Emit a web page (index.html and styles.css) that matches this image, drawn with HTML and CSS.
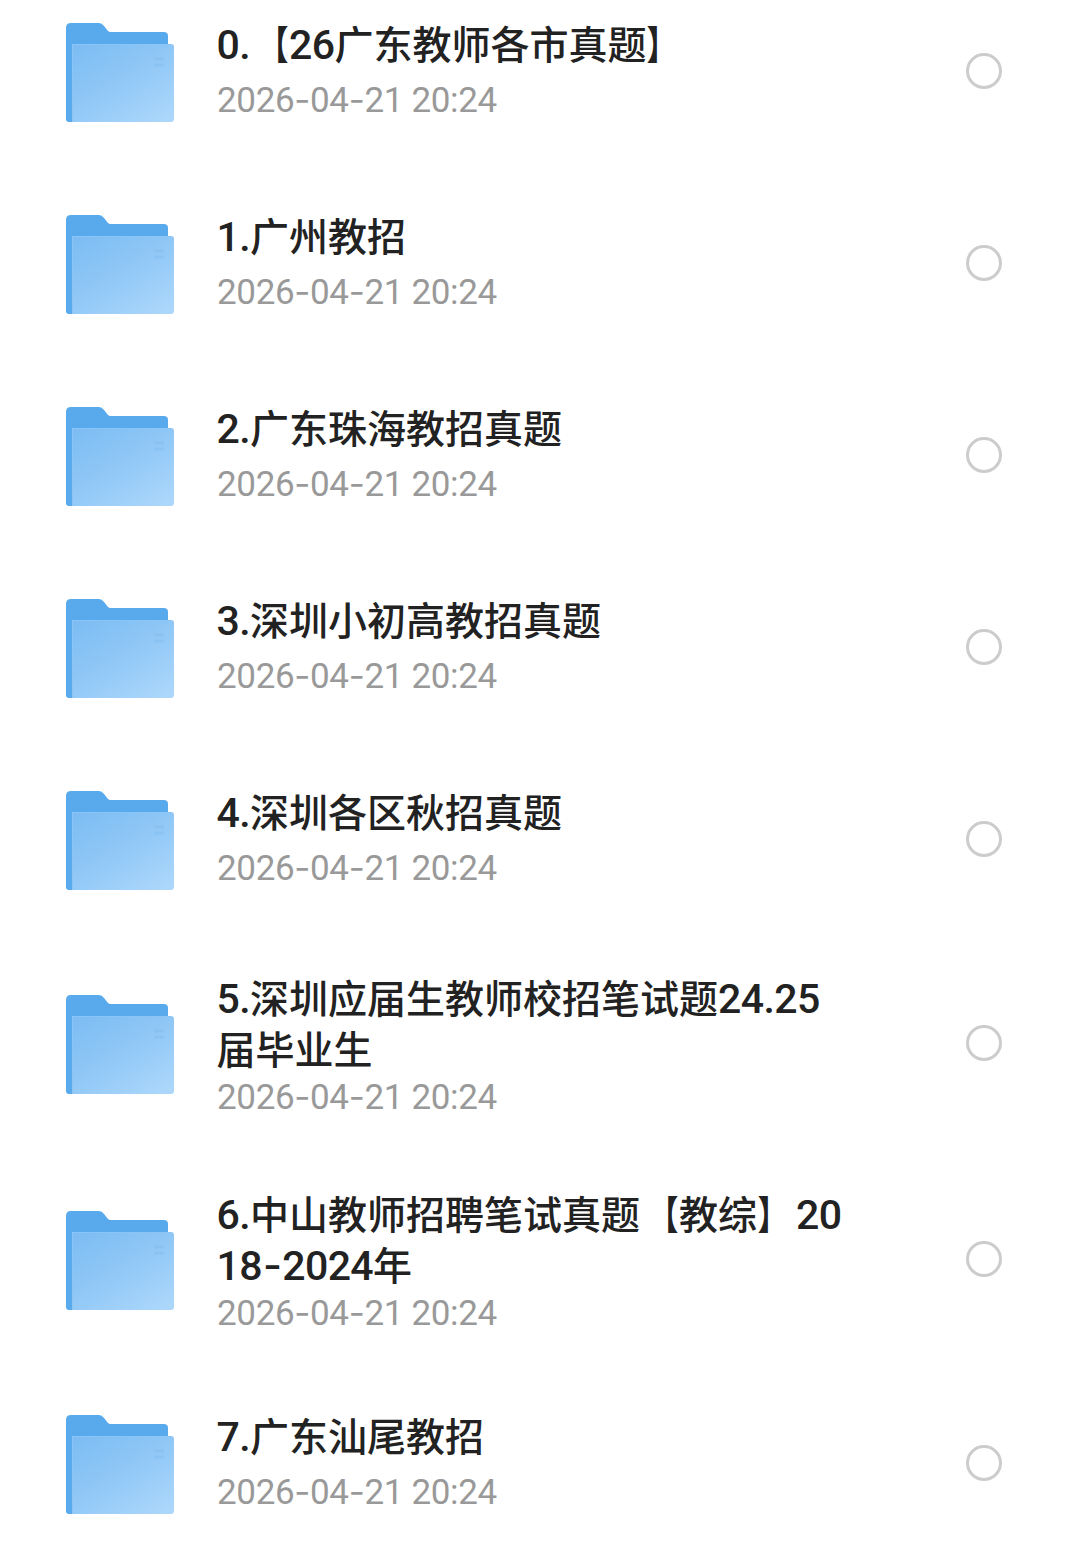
FILE: index.html
```
<!DOCTYPE html>
<html lang="zh-CN">
<head>
    <meta charset="UTF-8">
    <meta name="viewport" content="width=device-width, initial-scale=1.0">
    <title>文件列表</title>
    <link rel="stylesheet" href="styles.css">
</head>
<body>
    <!-- 文件夹图标 -->
    <svg class="defs" width="0" height="0" aria-hidden="true">
        <defs>
            <linearGradient id="front" x1="0.1" y1="0" x2="0.9" y2="1">
                <stop offset="0" stop-color="#7dbdf3"/>
                <stop offset="0.45" stop-color="#8fc7f6"/>
                <stop offset="1" stop-color="#acd7fb"/>
            </linearGradient>
            <symbol id="folder" viewBox="0 0 108 99">
                <path d="M0 5Q0 0 5 0H33Q36 0 38 3L42 8Q43 9 45 9H98Q102 9 102 13V60H60V99H3Q0 99 0 96Z" fill="#59aaec"/>
                <path d="M6 21H105Q108 21 108 24V96Q108 99 105 99H6Z" fill="url(#front)"/>
                <path d="M6.5 99V21.5H105" fill="none" stroke="#8ac5f6" stroke-width="1"/>
                <path d="M88 36H98M88 42H98" stroke="#7bb8ea" stroke-width="3" opacity="0.35"/>
            </symbol>
        </defs>
    </svg>

    <ul class="file-list">
        <li class="file-item">
            <svg class="folder"><use href="#folder"/></svg>
            <div class="info">
                <div class="name"><span class="num">0.</span><b class="open">【</b><span class="num">26</span>广东教师各市真题<b class="close">】</b></div>
                <div class="date">2026<i>-</i>04<i>-</i>21 20:24</div>
            </div>
            <span class="check"></span>
        </li>
        <li class="file-item">
            <svg class="folder"><use href="#folder"/></svg>
            <div class="info">
                <div class="name"><span class="num">1.</span>广州教招</div>
                <div class="date">2026<i>-</i>04<i>-</i>21 20:24</div>
            </div>
            <span class="check"></span>
        </li>
        <li class="file-item">
            <svg class="folder"><use href="#folder"/></svg>
            <div class="info">
                <div class="name"><span class="num">2.</span>广东珠海教招真题</div>
                <div class="date">2026<i>-</i>04<i>-</i>21 20:24</div>
            </div>
            <span class="check"></span>
        </li>
        <li class="file-item">
            <svg class="folder"><use href="#folder"/></svg>
            <div class="info">
                <div class="name"><span class="num">3.</span>深圳小初高教招真题</div>
                <div class="date">2026<i>-</i>04<i>-</i>21 20:24</div>
            </div>
            <span class="check"></span>
        </li>
        <li class="file-item">
            <svg class="folder"><use href="#folder"/></svg>
            <div class="info">
                <div class="name"><span class="num">4.</span>深圳各区秋招真题</div>
                <div class="date">2026<i>-</i>04<i>-</i>21 20:24</div>
            </div>
            <span class="check"></span>
        </li>
        <li class="file-item two-line">
            <svg class="folder"><use href="#folder"/></svg>
            <div class="info">
                <div class="name"><span class="num">5.</span>深圳应届生教师校招笔试题<span class="num">24.25</span><br>届毕业生</div>
                <div class="date">2026<i>-</i>04<i>-</i>21 20:24</div>
            </div>
            <span class="check"></span>
        </li>
        <li class="file-item two-line">
            <svg class="folder"><use href="#folder"/></svg>
            <div class="info">
                <div class="name"><span class="num">6.</span>中山教师招聘笔试真题<b class="open">【</b>教综<b class="close">】</b><span class="num">20<br>18<i>-</i>2024</span>年</div>
                <div class="date">2026<i>-</i>04<i>-</i>21 20:24</div>
            </div>
            <span class="check"></span>
        </li>
        <li class="file-item">
            <svg class="folder"><use href="#folder"/></svg>
            <div class="info">
                <div class="name"><span class="num">7.</span>广东汕尾教招</div>
                <div class="date">2026<i>-</i>04<i>-</i>21 20:24</div>
            </div>
            <span class="check"></span>
        </li>
    </ul>
</body>
</html>
```
FILE: styles.css
```
* {
    box-sizing: border-box;
}

body {
    height: 1545px;
    margin: 0;
    overflow: hidden;
    background: #fff;
    color: #222;
    font-family: Roboto, "Noto Sans CJK SC", sans-serif;
}

.defs {
    display: block;
}

.file-list {
    list-style: none;
    margin: -24px 0 0;
    padding: 0;
}

.file-item {
    display: flex;
    align-items: center;
    height: 192px;
    padding: 0 77px 0 66px;
}

.file-item.two-line {
    height: 216px;
}

.folder {
    flex: none;
    width: 108px;
    height: 99px;
}

.info {
    flex: 1;
    margin-left: 42.5px;
    padding-bottom: 6px;
    white-space: nowrap;
}

.two-line .info {
    padding: 2px 0 0;
}

.name {
    font-family: "Noto Sans CJK SC", sans-serif;
    font-size: 39px;
    font-weight: 500;
    line-height: 51px;
    margin-bottom: 10px;
    text-spacing-trim: space-all;
}

.two-line .name {
    margin-bottom: 2px;
}

.num {
    font-family: Roboto, sans-serif;
    font-size: 41px;
    line-height: 1;
    letter-spacing: -0.6px;
}

.num i {
    margin: 0 1px;
}

/* 方括号收窄 */
.open,
.close {
    display: inline-block;
    font-weight: 900;
    line-height: 1;
    transform: scaleX(0.75);
}

.open {
    transform-origin: 92% 50%;
}

.close {
    transform-origin: 8% 50%;
}

.date {
    margin-left: 0.5px;
    font-size: 35px;
    font-weight: 400;
    line-height: 43px;
    letter-spacing: -0.35px;
    color: #999;
}

/* 数字之间的宽连字符 */
i {
    font-family: Inter, sans-serif;
    font-style: normal;
}

.check {
    flex: none;
    width: 36px;
    height: 36px;
    margin-top: -2px;
    border: 3px solid #ccc;
    border-radius: 50%;
}
```
